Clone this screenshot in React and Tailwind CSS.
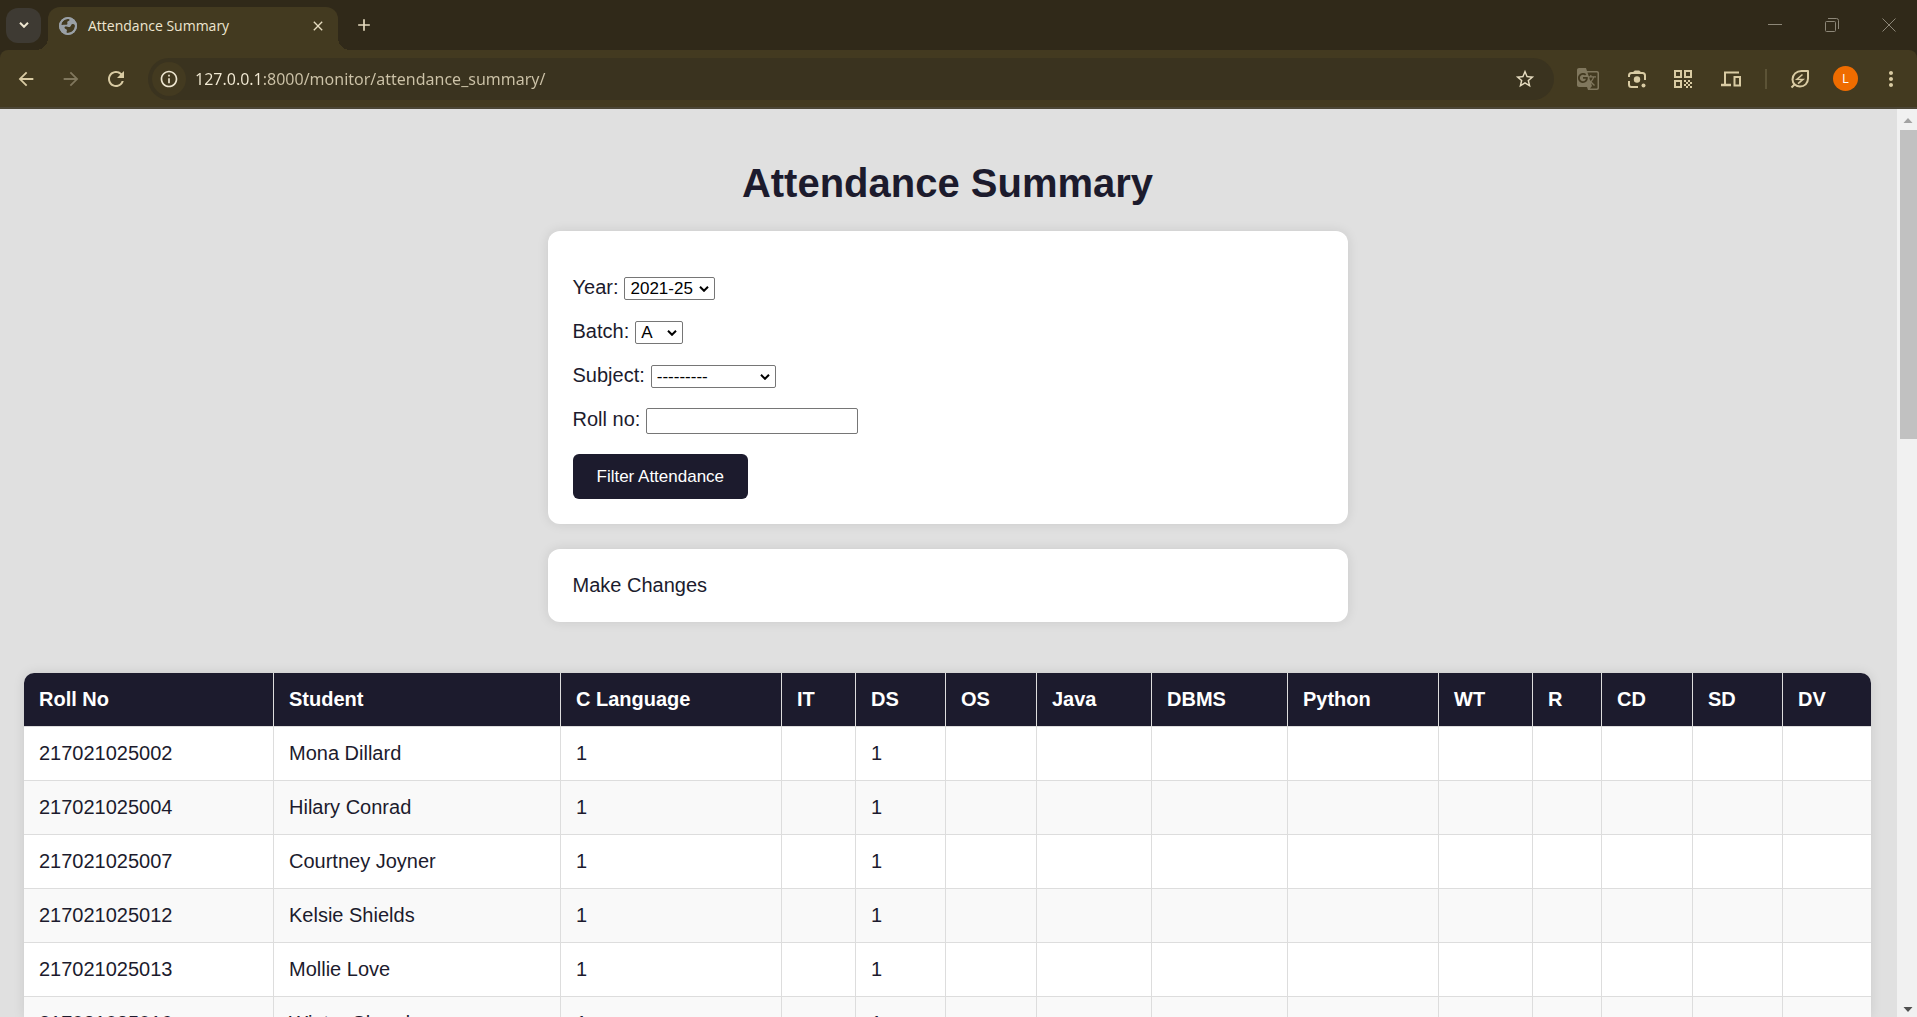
import React from "react";
import {
  MdArrowBack,
  MdArrowForward,
  MdRefresh,
  MdInfoOutline,
  MdStarOutline,
  MdClose,
  MdAdd,
  MdMoreVert,
  MdGTranslate,
} from "react-icons/md";

const columns = [
  { name: "Roll No", width: "w-[250px]" },
  { name: "Student", width: "w-[287px]" },
  { name: "C Language", width: "w-[221px]" },
  { name: "IT", width: "w-[74px]" },
  { name: "DS", width: "w-[90px]" },
  { name: "OS", width: "w-[91px]" },
  { name: "Java", width: "w-[115px]" },
  { name: "DBMS", width: "w-[136px]" },
  { name: "Python", width: "w-[151px]" },
  { name: "WT", width: "w-[94px]" },
  { name: "R", width: "w-[69px]" },
  { name: "CD", width: "w-[91px]" },
  { name: "SD", width: "w-[90px]" },
  { name: "DV", width: "w-[88px]" },
];

const students = [
  { "Roll No": "217021025002", Student: "Mona Dillard", "C Language": 1, DS: 1 },
  { "Roll No": "217021025004", Student: "Hilary Conrad", "C Language": 1, DS: 1 },
  { "Roll No": "217021025007", Student: "Courtney Joyner", "C Language": 1, DS: 1 },
  { "Roll No": "217021025012", Student: "Kelsie Shields", "C Language": 1, DS: 1 },
  { "Roll No": "217021025013", Student: "Mollie Love", "C Language": 1, DS: 1 },
  { "Roll No": "217021025016", Student: "Winter Shand", "C Language": 1, DS: 1 },
];

function GlobeIcon() {
  return (
    <svg viewBox="0 0 18 18" className="size-[18px]">
      <circle cx="9" cy="9" r="9" fill="#9aa0a6" />
      <path d="M2 7.500C2.800 4.400 5 2.300 8 1.900c1.600-.2 2.700.3 2.600 1.100-.1 1-1.900.9-2.300 1.900-.3.900.5 1.400 0 2.300-.6 1-2.300.5-3.200.6-1.200.1-2.200.3-3.100-.3z" fill="#433a20" />
      <path d="M7.800 15.900c-.6-1.200.3-2 .1-2.900-.2-1-1.800-1-2.300-2.100-.3-.8.200-1.500 1.200-1.500 1.500 0 2.700.9 4 .5 1.500-.5.9-2.500 2.600-2.900 1.100-.2 2 .2 2.500 1 .5 3.900-2.200 7.800-8.100 7.900z" fill="#433a20" />
      <circle cx="9" cy="9" r="8" fill="none" stroke="#9aa0a6" strokeWidth="2" />
    </svg>
  );
}

function LensIcon() {
  return (
    <svg viewBox="0 0 20 20" className="size-5" fill="none" stroke="currentColor" strokeWidth="2">
      <path d="M2 8V6.500A2.500 2.500 0 0 1 4.500 4h11A2.500 2.500 0 0 1 18 6.500V11" />
      <path d="M6.500 3.500l1-1.500h5l1 1.500z" fill="currentColor" strokeWidth="1" />
      <path d="M2 12v3.500A2.500 2.500 0 0 0 4.500 18H11" />
      <circle cx="10" cy="10.500" r="3.200" fill="currentColor" stroke="none" />
      <circle cx="16.500" cy="16.500" r="2" fill="currentColor" stroke="none" />
    </svg>
  );
}

function QrIcon() {
  return (
    <svg viewBox="0 0 18 18" className="size-[18px]" fill="none" stroke="currentColor" strokeWidth="2">
      <path d="M1 1h6v6H1zM11 1h6v6h-6zM1 11h6v6H1z" />
      <path
        d="M10 10h2v2h-2zM14 10h2v2h-2zM12 12h2v2h-2zM16 12h2v2h-2zM10 14h2v2h-2zM14 14h2v2h-2zM12 16h2v2h-2zM16 16h2v2h-2z"
        fill="currentColor"
        stroke="none"
      />
    </svg>
  );
}

function DevicesIcon() {
  return (
    <svg viewBox="0 0 20 16" className="h-4 w-5" fill="none" stroke="currentColor" strokeWidth="2">
      <path d="M18 1.500H4V14" />
      <path d="M0 14h10" strokeWidth="2.500" />
      <path d="M13.500 6h5.500v8.500h-5.500z" />
    </svg>
  );
}

function LeafIcon() {
  return (
    <svg viewBox="0 0 20 20" className="size-5" fill="none" stroke="currentColor" strokeWidth="2">
      <path d="M1.500 18.500l3-3" />
      <path d="M18 2v7.500c0 5-3.500 8-8 8-4 0-7.500-3-7.500-7C2.500 5.500 6.500 2 11.500 2z" strokeLinejoin="round" />
      <path d="M12.500 5.500L7 10.200l6 .2-5 4.300" strokeWidth="1.600" />
    </svg>
  );
}

function Chevron({ className }) {
  return (
    <svg viewBox="0 0 10 6" className={className} fill="none" stroke="currentColor" strokeWidth="2">
      <path d="M1 .8l4 4 4-4" />
    </svg>
  );
}

function TabStrip() {
  return (
    <div className="flex h-[50px] items-center text-[#e6dcc0]">
      <button aria-label="Search tabs" className="ml-1.5 flex size-[35px] items-center justify-center rounded-xl bg-[#3e3a33] text-[#eee6d0]">
        <Chevron className="h-1.5 w-2.5" />
      </button>
      <div className="relative ml-[7px] flex h-[43px] w-[290px] items-center self-end rounded-t-xl bg-[#433a20] pr-3 pb-1.5 pl-[11px]">
        <span className="absolute bottom-0 -left-3 size-3 bg-[radial-gradient(circle_at_0_0,transparent_12px,#433a20_12px)]" />
        <span className="absolute -right-3 bottom-0 size-3 bg-[radial-gradient(circle_at_100%_0,transparent_12px,#433a20_12px)]" />
        <GlobeIcon />
        <span className="ml-[11px] flex-1 text-sm text-[#eee6d0]">Attendance Summary</span>
        <button aria-label="Close tab"><MdClose className="size-4" /></button>
      </div>
      <button aria-label="New tab" className="ml-4"><MdAdd className="size-5" /></button>
      <div className="ml-auto flex gap-[43px] pr-[21px] text-[#8d8778]">
        <button aria-label="Minimize">
          <svg viewBox="0 0 14 14" className="size-3.5" fill="none" stroke="currentColor"><path d="M0 6.500h14" /></svg>
        </button>
        <button aria-label="Restore">
          <svg viewBox="0 0 14 14" className="size-3.5" fill="none" stroke="currentColor">
            <rect x=".5" y="3.500" width="10" height="10" rx="1" /><path d="M3 .5h8.500a2 2 0 0 1 2 2V11" />
          </svg>
        </button>
        <button aria-label="Close">
          <svg viewBox="0 0 14 14" className="size-3.5" fill="none" stroke="currentColor"><path d="M.5.5l13 13M13.500.5l-13 13" /></svg>
        </button>
      </div>
    </div>
  );
}

function Toolbar() {
  return (
    <div className="flex h-[59px] items-center rounded-t-lg border-b-2 border-[#4c4636] bg-[#433a20] text-[#d9cba3]">
      <button aria-label="Back" className="ml-[15px]"><MdArrowBack className="size-[22px]" /></button>
      <button aria-label="Forward" className="ml-[23px] text-[#80775d]"><MdArrowForward className="size-[22px]" /></button>
      <button aria-label="Reload" className="ml-[22px]"><MdRefresh className="size-6" /></button>
      <div className="ml-5 flex h-[42px] flex-1 items-center rounded-full bg-[#3a331f] pr-[18px] pl-1">
        <button aria-label="Site information" className="flex size-[34px] items-center justify-center rounded-full bg-[#433a20] text-[#eee6d0]">
          <MdInfoOutline className="size-5" />
        </button>
        <input
          aria-label="Address"
          className="ml-[9px] h-8 flex-1 bg-[linear-gradient(90deg,#f2ead4_67px,#cdc3a8_67px)] bg-clip-text font-['Noto_Sans',sans-serif] text-base text-transparent outline-none"
          defaultValue="127.0.0.1:8000/monitor/attendance_summary/"
        />
        <button aria-label="Bookmark" className="text-[#e6dcc0]"><MdStarOutline className="size-[22px]" /></button>
      </div>
      <div className="ml-[22px] flex items-center gap-[27px]">
        <button aria-label="Translate" className="text-[#80775d]"><MdGTranslate className="size-6" /></button>
        <button aria-label="Search with Lens"><LensIcon /></button>
        <button aria-label="QR code"><QrIcon /></button>
        <button aria-label="Send to your devices" className="ml-0.5"><DevicesIcon /></button>
      </div>
      <span className="ml-6 h-5 w-0.5 bg-[#5c5336]" />
      <button aria-label="Energy saver" className="ml-[23px]"><LeafIcon /></button>
      <button aria-label="Profile" className="ml-[23px] flex size-[25px] items-center justify-center rounded-full bg-[#ef6c00] text-[13px] text-white">L</button>
      <button aria-label="Menu" className="mr-3.5 ml-[21px]"><MdMoreVert className="size-6" /></button>
    </div>
  );
}

function Field({ id, label, children }) {
  return (
    <div className="flex gap-1.5">
      <label htmlFor={id} className="leading-[22px]">{label}</label>
      {children}
    </div>
  );
}

function Select({ id, width, options }) {
  return (
    <span className="relative mt-px">
      <select id={id} className={`${width} block h-[23px] appearance-none rounded-xs border border-[#767676] bg-white pl-[5px] text-[17px] leading-5 text-black`}>
        {options.map((option) => (
          <option key={option}>{option}</option>
        ))}
      </select>
      <Chevron className="pointer-events-none absolute top-[9px] right-1.5 h-1.5 w-2.5 text-black" />
    </span>
  );
}

function FilterForm() {
  return (
    <form className="flex w-full max-w-[800px] flex-col items-start gap-5 rounded-xl bg-white px-[25px] pt-[45px] pb-[25px] shadow-[0_0_12px_rgba(0,0,0,0.1)]">
      <Field id="year" label="Year:">
        <Select id="year" width="w-[91px]" options={["2021-25"]} />
      </Field>
      <Field id="batch" label="Batch:">
        <Select id="batch" width="w-12" options={["A"]} />
      </Field>
      <Field id="subject" label="Subject:">
        <Select id="subject" width="w-[125px]" options={["---------"]} />
      </Field>
      <Field id="roll" label="Roll no:">
        <input id="roll" type="text" className="h-[26px] w-[212px] rounded-xs border border-[#767676] px-1 text-[17px] text-black" />
      </Field>
      <button type="button" className="h-[45px] rounded-md bg-[#1c1b2d] px-6 text-[17px] text-white">Filter Attendance</button>
    </form>
  );
}

function AttendanceTable() {
  return (
    <div className="mt-[51px] w-full overflow-hidden rounded-t-[10px] shadow-[0_0_12px_rgba(0,0,0,0.1)]">
      <table className="w-full table-fixed border-separate border-spacing-0 bg-white text-left leading-[23px]">
        <colgroup>
          {columns.map((column) => (
            <col key={column.name} className={column.width} />
          ))}
        </colgroup>
        <thead className="bg-[#1c1b2d] text-white">
          <tr>
            {columns.map((column) => (
              <th key={column.name} className="border-r border-b border-[#dddddd] p-[15px] font-bold last:border-r-0">{column.name}</th>
            ))}
          </tr>
        </thead>
        <tbody>
          {students.map((student) => (
            <tr key={student["Roll No"]} className="even:bg-[#f9f9f9]">
              {columns.map((column) => (
                <td key={column.name} className="border-r border-b border-[#dddddd] p-[15px] last:border-r-0">{student[column.name]}</td>
              ))}
            </tr>
          ))}
        </tbody>
      </table>
    </div>
  );
}

function Scrollbar() {
  return (
    <div className="flex w-5 flex-col items-center bg-[#f1f1f1]">
      <svg viewBox="0 0 20 21" className="h-[21px] w-5" fill="#a3a3a3"><path d="M6.500 14l4.500-5 4.500 5z" /></svg>
      <div className="ml-0.5 h-[34%] w-[17px] bg-[#c1c1c1]" />
      <svg viewBox="0 0 20 16" className="mt-auto h-4 w-5" fill="#505050"><path d="M6.500 6l4.500 5 4.500-5z" /></svg>
    </div>
  );
}

export default function App() {
  return (
    <div className="flex h-screen flex-col overflow-hidden">
      <header className="bg-[#302919] font-['Open_Sans',sans-serif]">
        <TabStrip />
        <Toolbar />
      </header>
      <div className="flex min-h-0 flex-1 font-['Liberation_Sans',Arial,sans-serif] text-xl text-[#1c1b2d]">
        <main className="flex min-w-0 flex-1 flex-col items-center overflow-hidden bg-[#e0e0e0] pt-[51px] pr-[26px] pl-6">
          <h1 className="mb-[25px] text-[40px] leading-[46px] font-bold">Attendance Summary</h1>
          <FilterForm />
          <section className="mt-[25px] w-full max-w-[800px] rounded-xl bg-white p-[25px] leading-[23px] shadow-[0_0_12px_rgba(0,0,0,0.1)]">
            <a href="#changes">Make Changes</a>
          </section>
          <AttendanceTable />
        </main>
        <Scrollbar />
      </div>
    </div>
  );
}
